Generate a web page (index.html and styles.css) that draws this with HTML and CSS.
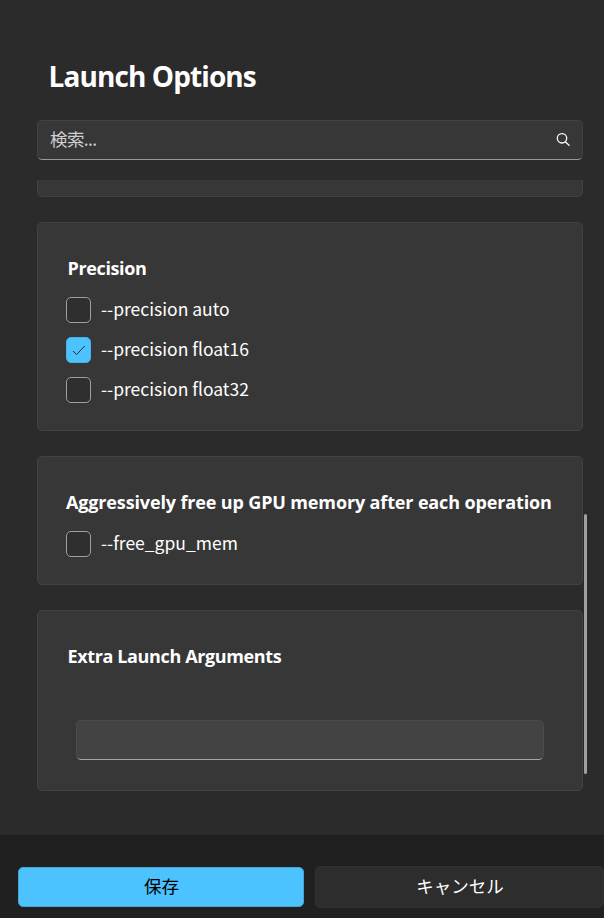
FILE: index.html
```
<!DOCTYPE html>
<html lang="ja">
<head>
  <meta charset="UTF-8">
  <meta name="viewport" content="width=device-width, initial-scale=1.0">
  <title>Launch Options</title>
  <link rel="stylesheet" href="styles.css">
</head>
<body>
  <main class="content">
    <h1>Launch Options</h1>

    <form class="search field" name="search">
      <input type="text" name="query" placeholder="検索...">
      <svg class="search-icon" viewBox="0 0 14 14" width="14" height="14">
        <circle cx="6" cy="6.3" r="4.7"/>
        <path d="M9.3 9.7l4.2 4"/>
      </svg>
    </form>

    <div class="options">
      <section class="card card-clipped"></section>

      <section class="card">
        <h2 class="inset">Precision</h2>
        <label class="option"><input type="checkbox"><span>--precision auto</span></label>
        <label class="option">
          <input type="checkbox" checked>
          <span>--precision float16</span>
          <svg class="check" viewBox="0 0 25 26" width="25" height="26"><path d="M7 14l3.6 3.6L18.7 9"/></svg>
        </label>
        <label class="option"><input type="checkbox"><span>--precision float32</span></label>
      </section>

      <section class="card">
        <h2 class="wide">Aggressively free up GPU memory after each operation</h2>
        <label class="option"><input type="checkbox"><span>--free_gpu_mem</span></label>
      </section>

      <section class="card">
        <h2 class="inset extra">Extra Launch Arguments</h2>
        <div class="field extra-args"><input type="text" name="extra"></div>
      </section>

      <div class="scrollbar"></div>
    </div>
  </main>

  <footer class="actions">
    <button class="btn primary" type="button">保存</button>
    <button class="btn" type="button">キャンセル</button>
  </footer>
</body>
</html>
```
FILE: styles.css
```
* {
  box-sizing: border-box;
}

body {
  margin: 0;
  height: 918px;
  display: flex;
  flex-direction: column;
  overflow: hidden;
  font: 17.5px/24px "Noto Sans CJK JP", sans-serif;
  color: #fff;
  background: #2b2b2b;
}

h1,
h2 {
  margin: 0;
  font-family: "Open Sans", sans-serif;
  font-weight: 700;
  white-space: nowrap;
}

h1 {
  height: 64px;
  padding-left: 11.5px;
  font-size: 28px;
  line-height: 40px;
  letter-spacing: -0.9px;
}

h2 {
  height: 24px;
  margin-bottom: 17px;
  font-size: 18px;
  line-height: 24px;
  letter-spacing: -0.37px;
}

h2.inset {
  padding-left: 1.5px;
}

h2.wide {
  letter-spacing: -0.14px;
}

.content {
  flex: 1;
  min-height: 0;
  padding: 56px 21px 0 37px;
  display: flex;
  flex-direction: column;
}

.field {
  height: 40px;
  display: flex;
  align-items: center;
  border: 1px solid #424242;
  border-bottom-color: #9a9a9a;
  border-radius: 5px;
  background: #373737;
}

.field input {
  flex: 1;
  min-width: 0;
  padding: 0;
  border: 0;
  outline: 0;
  font: inherit;
  color: inherit;
  background: none;
}

.field input::placeholder {
  color: #cfcfcf;
}

.search {
  flex: none;
  margin-bottom: 20px;
  padding: 0 12px 2px 12px;
}

.search input {
  letter-spacing: -0.6px;
}

.search-icon {
  fill: none;
  stroke: #fff;
  stroke-width: 1.3;
}

.options {
  position: relative;
  flex: 1;
  min-height: 0;
  display: flex;
  flex-direction: column;
  gap: 25px;
}

.card {
  flex: none;
  padding: 33px 28px 28px;
  border: 1px solid #424242;
  border-radius: 5px;
  background: #373737;
}

.card-clipped {
  height: 17px;
  padding: 0;
  border-top: 0;
  border-radius: 0 0 5px 5px;
}

.option {
  position: relative;
  height: 26px;
  display: flex;
  align-items: center;
  gap: 10px;
}

.option + .option {
  margin-top: 14px;
}

.option:last-child {
  margin-bottom: -1px;
}

.option span {
  padding-bottom: 2px;
}

.option input {
  appearance: none;
  margin: 0;
  width: 25px;
  height: 26px;
  border: 1px solid #a0a0a0;
  border-radius: 5px;
  background: #2f2f2f;
}

.option input:checked {
  border-color: #48b2e9;
  background: #4cc2ff;
}

.check {
  position: absolute;
  left: 0;
  top: 0;
  fill: none;
  stroke: #123040;
  stroke-width: 1;
}

.extra {
  margin-bottom: 52px;
}

.extra-args {
  margin: 0 10px 2px;
  border-color: #4b4b4b;
  border-bottom-color: #a5a5a5;
  background: #434343;
}

.scrollbar {
  position: absolute;
  right: -4px;
  top: 334px;
  width: 3px;
  height: 260px;
  border-radius: 2px;
  background: #9f9f9f;
}

.actions {
  flex: none;
  height: 83px;
  padding: 30px 0 10px 18px;
  display: flex;
  align-items: center;
  gap: 11px;
  border-top: 1px solid #1d1d1d;
  background: #202020;
}

.btn {
  flex: 1;
  height: 42px;
  padding: 0 0 2px 1px;
  font: inherit;
  color: #fff;
  border: 1px solid #323232;
  border-radius: 5px;
  background: #2d2d2d;
}

.btn.primary {
  flex: none;
  width: 286px;
  height: 40px;
  color: #000;
  border-color: #48a5d5;
  background: #4cc2ff;
}
```
